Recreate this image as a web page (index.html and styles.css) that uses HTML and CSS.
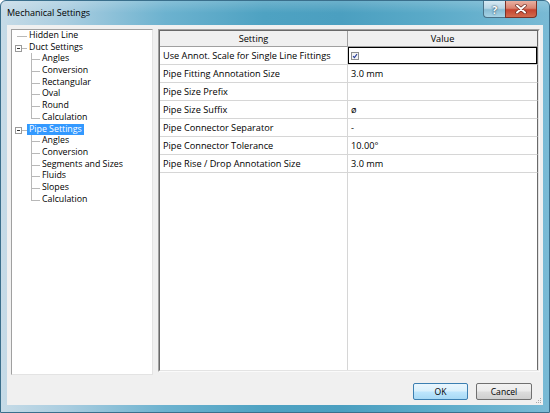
FILE: index.html
```html
<!DOCTYPE html>
<html>
<head>
<meta charset="utf-8">
<title>Mechanical Settings</title>
<link rel="stylesheet" href="styles.css">
</head>
<body>
<div class="window">
  <div class="titlebar">
    <span class="title">Mechanical Settings</span>
    <div class="caption-btns">
      <span class="cap help">?</span>
      <span class="cap close">
        <svg width="14" height="10" viewBox="0 0 14 10"><path d="M3 1.5 L11 8.5 M11 1.5 L3 8.5" stroke="#6a2a20" stroke-width="3.4" stroke-linecap="round"/><path d="M3 1.5 L11 8.5 M11 1.5 L3 8.5" stroke="#ffffff" stroke-width="2" stroke-linecap="round"/></svg>
      </span>
    </div>
  </div>
  <div class="client">
    <div class="main">
      <div class="tree">
        <ul class="roots">
          <li class="root"><div class="row"><span class="label">Hidden Line</span></div></li>
          <li class="root"><div class="row"><span class="exp"></span><span class="label">Duct Settings</span></div>
            <ul class="children">
              <li class="row"><span class="label">Angles</span></li>
              <li class="row"><span class="label">Conversion</span></li>
              <li class="row"><span class="label">Rectangular</span></li>
              <li class="row"><span class="label">Oval</span></li>
              <li class="row"><span class="label">Round</span></li>
              <li class="row last"><span class="label">Calculation</span></li>
            </ul>
          </li>
          <li class="root"><div class="row"><span class="exp"></span><span class="label sel">Pipe Settings</span></div>
            <ul class="children">
              <li class="row"><span class="label">Angles</span></li>
              <li class="row"><span class="label">Conversion</span></li>
              <li class="row"><span class="label">Segments and Sizes</span></li>
              <li class="row"><span class="label">Fluids</span></li>
              <li class="row"><span class="label">Slopes</span></li>
              <li class="row last"><span class="label">Calculation</span></li>
            </ul>
          </li>
        </ul>
      </div>
      <div class="grid-wrap">
        <div class="grid">
          <div class="hd">Setting</div>
          <div class="hd">Value</div>
          <div class="c">Use Annot. Scale for Single Line Fittings</div>
          <div class="v focus"><span class="chk"><svg width="8" height="8" viewBox="0 0 8 8"><rect x="0.5" y="0.5" width="7" height="7" fill="#f4f4f4" stroke="#8e8f8f"/><path d="M2 4.2 L3.4 5.6 L6 2.2" stroke="#2a3f9a" stroke-width="1.1" fill="none"/></svg></span></div>
          <div class="c">Pipe Fitting Annotation Size</div>
          <div class="v">3.0 mm</div>
          <div class="c">Pipe Size Prefix</div>
          <div class="v"></div>
          <div class="c">Pipe Size Suffix</div>
          <div class="v">ø</div>
          <div class="c">Pipe Connector Separator</div>
          <div class="v">-</div>
          <div class="c">Pipe Connector Tolerance</div>
          <div class="v">10.00°</div>
          <div class="c">Pipe Rise / Drop Annotation Size</div>
          <div class="v">3.0 mm</div>
          <div class="fill"></div>
          <div class="fill last"></div>
        </div>
      </div>
    </div>
    <div class="actions">
      <button class="btn ok">OK</button>
      <button class="btn">Cancel</button>
    </div>
    <div class="grip">
      <svg width="7" height="7" viewBox="0 0 7 7"><g fill="#a9a9a9"><rect x="5" y="1" width="1" height="1"/><rect x="3" y="3" width="1" height="1"/><rect x="5" y="3" width="1" height="1"/><rect x="1" y="5" width="1" height="1"/><rect x="3" y="5" width="1" height="1"/><rect x="5" y="5" width="1" height="1"/></g></svg>
    </div>
  </div>
</div>
</body>
</html>
```
FILE: styles.css
```css
* { box-sizing: border-box; }
html, body { margin: 0; padding: 0; }
body {
  width: 550px;
  height: 413px;
  overflow: hidden;
  font-family: "Open Sans", "Noto Sans", sans-serif;
  font-size: 8.6px;
  color: #000;
  background: #fff;
}
.window {
  width: 550px;
  height: 413px;
  border: 1px solid #3a6f8c;
  border-radius: 6px 6px 0 0;
  background:
    linear-gradient(180deg, rgba(255,255,255,0.18) 0, rgba(255,255,255,0) 12px),
    linear-gradient(90deg, #c6dbe7 0%, #a9cde0 12%, #6cb2cf 30%, #4ea2c2 48%, #4b9fc0 62%, #5aaac8 78%, #79bad5 100%);
  display: flex;
  flex-direction: column;
}
.titlebar {
  height: 24px;
  flex: none;
  display: flex;
  align-items: flex-start;
}
.title {
  padding-left: 6px;
  line-height: 23px;
  font-size: 9px;
  color: #000;
}
.caption-btns {
  margin-left: auto;
  margin-right: 12px;
  display: flex;
}
.cap {
  height: 17px;
  display: flex;
  align-items: center;
  justify-content: center;
  border: 1px solid #4a7288;
  border-top: none;
}
.help {
  width: 22px;
  border-radius: 0 0 0 4px;
  border-right: none;
  background: linear-gradient(180deg, #d6e9f3 0%, #b8d6e6 45%, #88bcd4 55%, #a8d3e5 100%);
  color: #fff;
  font-weight: bold;
  font-size: 11px;
  text-shadow: 0 0 2px #2c4d60, 0 0 1px #2c4d60;
}
.close {
  width: 32px;
  border-color: #7a3328;
  border-radius: 0 0 4px 0;
  background: linear-gradient(180deg, #e9b0a2 0%, #d98471 45%, #c5432f 55%, #d26b4f 100%);
}
.client {
  flex: 1;
  margin: 0 6px 7px 6px;
  background: #f0f0f0;
  padding: 4px 3px 0 4px;
  position: relative;
  display: flex;
  flex-direction: column;
}
.main {
  display: flex;
  gap: 5px;
  align-items: flex-start;
}
.tree {
  width: 142px;
  height: 346px;
  background: #fff;
  border: 1px solid;
  border-color: #a0a0a0 #e3e3e3 #e3e3e3 #a0a0a0;
  padding-top: 0;
  font-size: 8.8px;
}
.tree ul { list-style: none; margin: 0; padding: 0; }
.row {
  position: relative;
  height: 11.7px;
  line-height: 11.7px;
  white-space: nowrap;
}
.root > .row { padding-left: 15px; }
.root > .row::before {
  content: "";
  position: absolute;
  left: 5px;
  width: 10px;
  top: 6px;
  border-top: 1px solid #b8b8b8;
}
.exp {
  position: absolute;
  left: 3px;
  top: 3px;
  width: 7px;
  height: 7px;
  border: 1px solid #9a9a9a;
  background: #fff;
  z-index: 1;
}
.exp::after {
  content: "";
  position: absolute;
  left: 1px;
  top: 2px;
  width: 3px;
  height: 1px;
  background: #333;
}
.label { padding: 0 2px; display: inline-block; }
.label.sel { background: #3399ff; color: #fff; }
.children .row { padding-left: 28px; }
.children .row::before {
  content: "";
  position: absolute;
  left: 19px;
  width: 9px;
  top: 6px;
  border-top: 1px solid #b8b8b8;
}
.children .row::after {
  content: "";
  position: absolute;
  left: 19px;
  top: 0;
  height: 100%;
  border-left: 1px solid #b8b8b8;
}
.children .row.last::after { height: 6.5px; }

.grid-wrap {
  width: 382px;
  height: 343px;
  border: 1px solid;
  border-color: #a0a0a0 #fafafa #fafafa #a0a0a0;
  background: #fff;
}
.grid {
  height: 100%;
  border: 1px solid;
  border-color: #696969 #e3e3e3 #e3e3e3 #696969;
  display: grid;
  grid-template-columns: 188px 1fr;
  grid-template-rows: 16px repeat(7, 18px) 1fr;
  font-size: 9.2px;
}
.hd {
  background: #f0f0f0;
  border-right: 1px solid #a0a0a0;
  border-bottom: 1px solid #a0a0a0;
  text-align: center;
  line-height: 15px;
  font-size: 9.2px;
}
.hd:nth-child(2) { border-right: 1px solid #6a6a6a; }
.c, .v {
  border-bottom: 1px solid #d6d6d6;
  line-height: 17px;
  padding-left: 3px;
  white-space: nowrap;
}
.c { border-right: 1px solid #d6d6d6; }
.v { border-right: 1px solid #6a6a6a; }
.v.focus { box-shadow: inset 0 0 0 1px #000; }
.chk { display: inline-flex; padding-top: 5px; vertical-align: top; }
.fill { border-right: 1px solid #d6d6d6; }
.fill.last { border-right: 1px solid #6a6a6a; }

.actions {
  display: flex;
  justify-content: flex-end;
  gap: 8px;
  margin-top: 8px;
  padding-right: 8px;
}
.btn {
  height: 17px;
  padding: 0;
  font-family: "Open Sans", "Noto Sans", sans-serif;
  font-size: 8.6px;
  color: #000;
  border-radius: 2px;
  border: 1px solid #707070;
  background: linear-gradient(180deg, #f2f2f2 0%, #ebebeb 48%, #dddddd 52%, #cfcfcf 100%);
  width: 56px;
}
.btn.ok {
  width: 55px;
  border-color: #3c7fb1;
  background: linear-gradient(180deg, #eaf6fd 0%, #d9f0fc 48%, #bee6fd 52%, #a7d9f5 100%);
}
.grip {
  position: absolute;
  right: 1px;
  bottom: 1px;
  line-height: 0;
}
```
